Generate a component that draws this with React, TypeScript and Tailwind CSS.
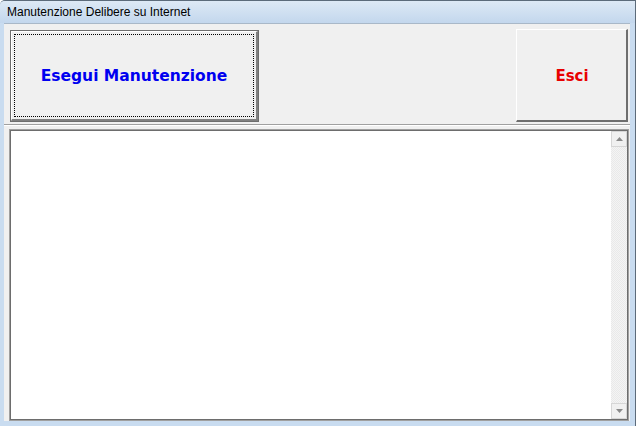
import React from "react";

export default function App() {
  return (
    <div className="w-[636px] h-[426px] bg-[#c9dcf0] flex flex-col overflow-hidden rounded-tl-[5px] border-t border-r border-[#5c6b7a]" style={{ fontFamily: '"Liberation Sans", Arial, sans-serif' }}>
      <div className="h-[22px] shrink-0 flex items-center pl-[7px] bg-gradient-to-b from-[#dde9f5] to-[#c3d7ed] text-[12px] text-black">
        Manutenzione Delibere su Internet
      </div>
      <div className="flex-1 ml-[4px] mr-[5px] mb-[5px] bg-[#f0f0f0] flex flex-col border-t border-[#a9b8c8]">
        <div className="h-[101px] shrink-0 flex items-start justify-between pt-[5px] pl-[6px] pr-[2px] border-b border-[#a0a0a0] shadow-[0_1px_0_#ffffff]">
          <button className="mt-[1px] w-[249px] h-[92px] border border-[#6e6e6e] bg-[#f0f0f0] p-0">
            <div className="w-full h-full border-t border-l border-t-white border-l-white border-b-2 border-r-2 border-b-[#808080] border-r-[#808080] p-[2px]">
              <div className="w-full h-full border border-dotted border-black bg-[#f0f0f0] flex items-center justify-center pt-[2px]">
                <span className="text-[#0000f0] font-bold text-[15.5px]" style={{ fontFamily: '"DejaVu Sans", Verdana, sans-serif' }}>
                  Esegui Manutenzione
                </span>
              </div>
            </div>
          </button>
          <button className="w-[112px] h-[93px] bg-[#f0f0f0] p-0 border-t border-l border-t-white border-l-white border-b-2 border-r-2 border-b-[#6e6e6e] border-r-[#6e6e6e] flex items-center justify-center pt-[2px]">
            <span className="text-[#e80000] font-bold text-[15px] pl-[1px]" style={{ fontFamily: '"DejaVu Sans", Verdana, sans-serif' }}>
              Esci
            </span>
          </button>
        </div>
        <div className="flex-1 ml-[5px] mr-[1px] mt-[4px] border border-[#a0a0a0] flex">
          <div className="flex-1 border-t border-l border-b border-r border-[#6d6d6d] bg-white flex">
            <div className="flex-1" />
            <div className="w-[16px] flex flex-col bg-[repeating-conic-gradient(#f4f4f4_0_25%,#e9e9e9_0_50%)] bg-[length:2px_2px]">
              <div className="h-[16px] bg-[#f0f0f0] border border-[#d6d6d6] flex items-center justify-center">
                <svg width="7" height="4" viewBox="0 0 7 4"><polygon points="0,4 7,4 3.5,0" fill="#8a8a8a" /></svg>
              </div>
              <div className="flex-1" />
              <div className="h-[16px] bg-[#f0f0f0] border border-[#d6d6d6] flex items-center justify-center">
                <svg width="7" height="4" viewBox="0 0 7 4"><polygon points="0,0 7,0 3.5,4" fill="#8a8a8a" /></svg>
              </div>
            </div>
          </div>
        </div>
      </div>
    </div>
  );
}
